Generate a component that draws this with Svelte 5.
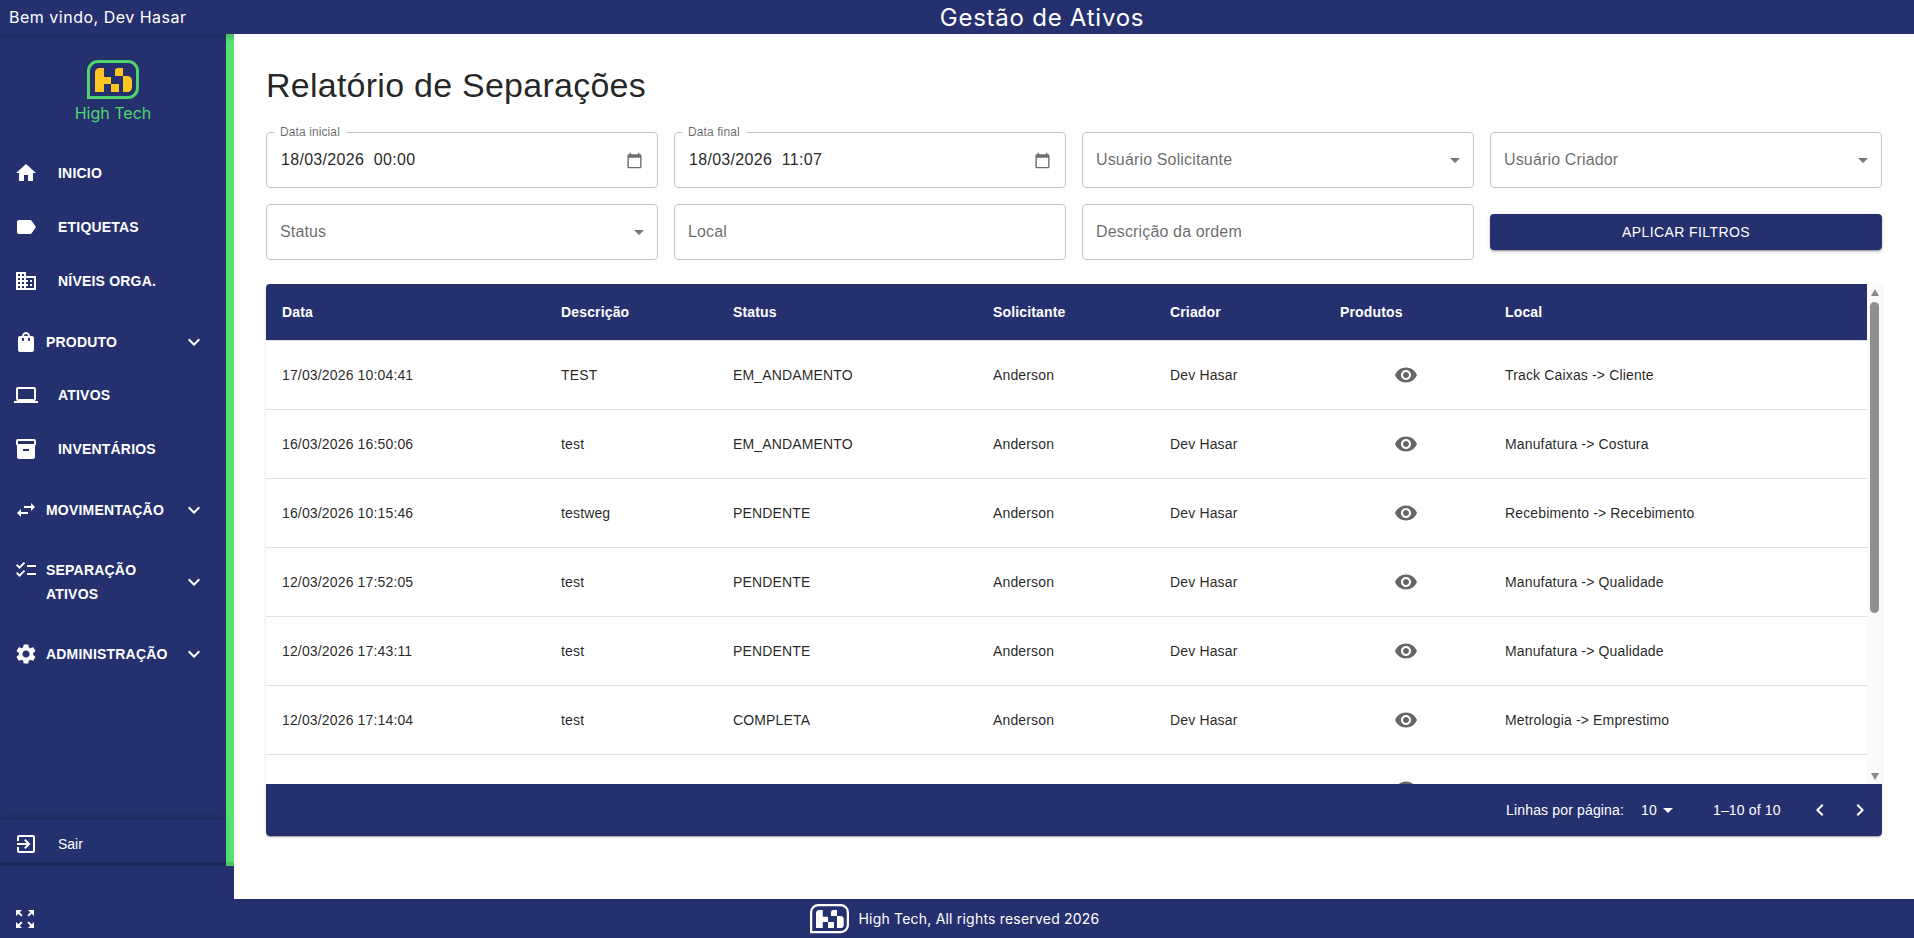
<script>
  const icons = {
    home: 'M10 20v-6h4v6h5v-8h3L12 3 2 12h3v8z',
    label: 'M17.63 5.84C17.27 5.33 16.67 5 16 5L5 5.01C3.9 5.01 3 5.9 3 7v10c0 1.1.9 1.99 2 1.99L16 19c.67 0 1.27-.33 1.63-.84L22 12l-4.37-6.16z',
    business: 'M12 7V3H2v18h20V7H12zM6 19H4v-2h2v2zm0-4H4v-2h2v2zm0-4H4V9h2v2zm0-4H4V5h2v2zm4 12H8v-2h2v2zm0-4H8v-2h2v2zm0-4H8V9h2v2zm0-4H8V5h2v2zm10 12h-8v-2h2v-2h-2v-2h2v-2h-2V9h8v10zm-2-8h-2v2h2v-2zm0 4h-2v2h2v-2z',
    bag: 'M18 6h-2c0-2.21-1.79-4-4-4S8 3.79 8 6H6c-1.1 0-2 .9-2 2v12c0 1.1.9 2 2 2h12c1.1 0 2-.9 2-2V8c0-1.1-.9-2-2-2zm-8 4c0 .55-.45 1-1 1s-1-.45-1-1V8h2v2zm2-6c1.1 0 2 .9 2 2h-4c0-1.1.9-2 2-2zm4 6c0 .55-.45 1-1 1s-1-.45-1-1V8h2v2z',
    laptop: 'M20 18c1.1 0 1.99-.9 1.99-2L22 6c0-1.1-.9-2-2-2H4c-1.1 0-2 .9-2 2v10c0 1.1.9 2 2 2H0v2h24v-2h-4zM4 6h16v10H4V6z',
    inventory: 'M20 2H4c-1 0-2 .9-2 2v3.01c0 .72.43 1.34 1 1.69V20c0 1.1 1.1 2 2 2h14c.9 0 2-.9 2-2V8.7c.57-.35 1-.97 1-1.69V4c0-1.1-1-2-2-2zm-5 12H9v-2h6v2zm5-7H4V4l16-.02V7z',
    swap: 'M6.99 11L3 15l3.99 4v-3H14v-2H6.99v-3zM21 9l-3.99-4v3H10v2h7.01v3L21 9z',
    checklist: 'M22 7h-9v2h9V7zm0 8h-9v2h9v-2zM5.54 11 2 7.46l1.41-1.41 2.12 2.12 4.24-4.24 1.41 1.41L5.54 11zm0 8L2 15.46l1.41-1.41 2.12 2.12 4.24-4.24 1.41 1.41L5.54 19z',
    settings: 'M19.14 12.94c.04-.3.06-.61.06-.94 0-.32-.02-.64-.07-.94l2.03-1.58c.18-.14.23-.41.12-.61l-1.92-3.32c-.12-.22-.37-.29-.59-.22l-2.39.96c-.5-.38-1.03-.7-1.62-.94l-.36-2.54c-.04-.24-.24-.41-.48-.41h-3.84c-.24 0-.43.17-.47.41l-.36 2.54c-.59.24-1.13.57-1.62.94l-2.39-.96c-.22-.08-.47 0-.59.22L2.74 8.87c-.12.21-.08.47.12.61l2.03 1.58c-.05.3-.09.63-.09.94s.02.64.07.94l-2.03 1.58c-.18.14-.23.41-.12.61l1.92 3.32c.12.22.37.29.59.22l2.39-.96c.5.38 1.03.7 1.62.94l.36 2.54c.05.24.24.41.48.41h3.84c.24 0 .44-.17.47-.41l.36-2.54c.59-.24 1.13-.56 1.62-.94l2.39.96c.22.08.47 0 .59-.22l1.92-3.32c.12-.22.07-.47-.12-.61l-2.01-1.58zM12 15.6c-1.98 0-3.6-1.62-3.6-3.6s1.62-3.6 3.6-3.6 3.6 1.62 3.6 3.6-1.62 3.6-3.6 3.6z',
    more: 'M16.59 8.59 12 13.17 7.41 8.59 6 10l6 6 6-6z',
    exit: 'M10.09 15.59L11.5 17l5-5-5-5-1.41 1.41L12.67 11H3v2h9.67l-2.58 2.59zM19 3H5c-1.11 0-2 .9-2 2v4h2V5h14v14H5v-4H3v4c0 1.1.89 2 2 2h14c1.1 0 2-.9 2-2V5c0-1.1-.9-2-2-2z',
    zoom: 'M15 3l2.3 2.3-2.89 2.87 1.42 1.42L18.7 6.7 21 9V3zM3 9l2.3-2.3 2.87 2.89 1.42-1.42L6.7 5.3 9 3H3zm6 12l-2.3-2.3 2.89-2.87-1.42-1.42L5.3 17.3 3 15v6zm12-6l-2.3 2.3-2.87-2.89-1.42 1.42 2.89 2.87L15 21h6z',
    eye: 'M12 4.5C7 4.5 2.73 7.61 1 12c1.73 4.39 6 7.5 11 7.5s9.27-3.11 11-7.5c-1.73-4.39-6-7.5-11-7.5zM12 17c-2.76 0-5-2.24-5-5s2.24-5 5-5 5 2.24 5 5-2.24 5-5 5zm0-8c-1.66 0-3 1.34-3 3s1.34 3 3 3 3-1.34 3-3-1.34-3-3-3z',
    calendar: 'M20 3h-1V1h-2v2H7V1H5v2H4c-1.1 0-2 .9-2 2v16c0 1.1.9 2 2 2h16c1.1 0 2-.9 2-2V5c0-1.1-.9-2-2-2zm0 18H4V8h16v13z',
    drop: 'M7 10l5 5 5-5z',
    left: 'M15.41 7.41 14 6l-6 6 6 6 1.41-1.41L10.83 12z',
    right: 'M10 6 8.59 7.41 13.17 12l-4.58 4.59L10 18l6-6z'
  };

  const menu = [
    { icon: 'home', label: 'INICIO' },
    { icon: 'label', label: 'ETIQUETAS' },
    { icon: 'business', label: 'NÍVEIS ORGA.' },
    { icon: 'bag', label: 'PRODUTO', group: true },
    { icon: 'laptop', label: 'ATIVOS' },
    { icon: 'inventory', label: 'INVENTÁRIOS' },
    { icon: 'swap', label: 'MOVIMENTAÇÃO', group: true },
    { icon: 'checklist', label: 'SEPARAÇÃO ATIVOS', group: true, tall: true },
    { icon: 'settings', label: 'ADMINISTRAÇÃO', group: true }
  ];

  const columns = ['Data', 'Descrição', 'Status', 'Solicitante', 'Criador', 'Produtos', 'Local'];

  const rows = [
    ['17/03/2026 10:04:41', 'TEST', 'EM_ANDAMENTO', 'Anderson', 'Dev Hasar', 'Track Caixas -> Cliente'],
    ['16/03/2026 16:50:06', 'test', 'EM_ANDAMENTO', 'Anderson', 'Dev Hasar', 'Manufatura -> Costura'],
    ['16/03/2026 10:15:46', 'testweg', 'PENDENTE', 'Anderson', 'Dev Hasar', 'Recebimento -> Recebimento'],
    ['12/03/2026 17:52:05', 'test', 'PENDENTE', 'Anderson', 'Dev Hasar', 'Manufatura -> Qualidade'],
    ['12/03/2026 17:43:11', 'test', 'PENDENTE', 'Anderson', 'Dev Hasar', 'Manufatura -> Qualidade'],
    ['12/03/2026 17:14:04', 'test', 'COMPLETA', 'Anderson', 'Dev Hasar', 'Metrologia -> Emprestimo'],
    ['', '', '', '', '', '']
  ];
</script>

{#snippet icon(name, cls = '')}
  <svg class="icon {cls}" viewBox="0 0 24 24" aria-hidden="true"><path d={icons[name]} /></svg>
{/snippet}

{#snippet logo(cls)}
  <svg class="logo {cls}" viewBox="0 0 52 40" aria-hidden="true">
    <path class="logo-frame" d="M1.5 37.5V11A9.5 9.5 0 0 1 11 1.5H41A9.5 9.5 0 0 1 50.5 11V28A9.5 9.5 0 0 1 41 37.5Z" />
    <path class="logo-mark" d="M8 12.5A4.5 4.5 0 0 1 12.5 8H17V17H24V24H17V32H8ZM24 24H32V32H24ZM31 8H36V16H28V11Q28 8 31 8ZM36 16H40.5A4.5 4.5 0 0 1 45 20.5V27.5A4.5 4.5 0 0 1 40.5 32H36Z" />
  </svg>
{/snippet}

<div class="app">
  <header class="topbar">
    <span class="welcome">Bem vindo, Dev Hasar</span>
    <span class="app-title">Gestão de Ativos</span>
  </header>

  <div class="middle">
    <aside class="sidebar">
      <div class="panel">
        <div class="brand">
          {@render logo('logo-large')}
          <span class="brand-name">High Tech</span>
        </div>
        <nav class="menu">
          {#each menu as item}
            <div class="item" class:group={item.group} class:tall={item.tall}>
              {@render icon(item.icon, item.icon === 'checklist' ? 'up' : '')}
              <span class="item-label">{item.label}</span>
              {#if item.group}
                {@render icon('more', 'chevron')}
              {/if}
            </div>
          {/each}
        </nav>
        <div class="logout">
          {@render icon('exit')}
          <span>Sair</span>
        </div>
      </div>
      <div class="band"></div>
    </aside>

    <main class="content">
      <h1>Relatório de Separações</h1>
      <section class="filters">
        <div class="field">
          <span class="legend">Data inicial</span>
          <span class="value">18/03/2026 00:00</span>
          {@render icon('calendar', 'cal')}
        </div>
        <div class="field">
          <span class="legend">Data final</span>
          <span class="value">18/03/2026 11:07</span>
          {@render icon('calendar', 'cal')}
        </div>
        <div class="field">
          <span class="hint">Usuário Solicitante</span>
          {@render icon('drop', 'caret')}
        </div>
        <div class="field">
          <span class="hint">Usuário Criador</span>
          {@render icon('drop', 'caret')}
        </div>
        <div class="field">
          <span class="hint">Status</span>
          {@render icon('drop', 'caret')}
        </div>
        <div class="field"><span class="hint">Local</span></div>
        <div class="field"><span class="hint">Descrição da ordem</span></div>
        <button class="apply" type="button">APLICAR FILTROS</button>
      </section>

      <section class="card">
        <div class="scroll-area">
          <div class="table-wrap">
            <table>
              <thead>
                <tr>
                  {#each columns as c}<th>{c}</th>{/each}
                </tr>
              </thead>
              <tbody>
                {#each rows as r}
                  <tr>
                    <td>{r[0]}</td>
                    <td>{r[1]}</td>
                    <td>{r[2]}</td>
                    <td>{r[3]}</td>
                    <td>{r[4]}</td>
                    <td class="eye-cell">{@render icon('eye', 'eye')}</td>
                    <td>{r[5]}</td>
                  </tr>
                {/each}
              </tbody>
            </table>
          </div>
          <div class="scrollbar">
            <span class="arrow arrow-up"></span>
            <span class="thumb"></span>
            <span class="arrow arrow-down"></span>
          </div>
        </div>
        <div class="pagination">
          <span>Linhas por página:</span>
          <span class="per-page">10 {@render icon('drop', 'page-caret')}</span>
          <span class="range">1–10 of 10</span>
          <span class="pager">
            {@render icon('left', 'page-nav')}
            {@render icon('right', 'page-nav')}
          </span>
        </div>
      </section>
    </main>
  </div>

  <footer class="footer">
    <span class="foot-left">{@render icon('zoom', 'expand')}</span>
    <span class="foot-center">
      {@render logo('logo-small')}
      <span>High Tech, All rights reserved 2026</span>
    </span>
    <span></span>
  </footer>
</div>

<style>
  :global(body) {
    margin: 0;
    background: #fff;
    font-family: "Liberation Sans", Arial, sans-serif;
  }

  .app {
    --navy: #25316f;
    --green: #56e170;
    display: flex;
    flex-direction: column;
    height: 938px;
    width: 1914px;
    overflow: hidden;
    background: var(--navy);
  }

  .icon {
    display: block;
    width: 24px;
    height: 24px;
    flex: none;
    fill: currentColor;
  }

  /* top bar */
  .topbar {
    display: flex;
    align-items: center;
    flex: none;
    height: 34px;
    padding-left: 9px;
    background: var(--navy);
    color: #fff;
    font-family: Inter, "Noto Sans", sans-serif;
  }
  .welcome {
    font-size: 16px;
    width: 177px;
    letter-spacing: 0.5px;
    white-space: nowrap;
  }
  .app-title {
    flex: 1;
    padding-right: 16px;
    text-align: center;
    font-size: 24px;
    letter-spacing: 0.75px;
  }

  .middle {
    display: flex;
    flex: 1;
    min-height: 0;
  }

  /* sidebar */
  .sidebar {
    position: relative;
    display: flex;
    flex-direction: column;
    flex: none;
    width: 234px;
  }
  .sidebar::before {
    content: "";
    position: absolute;
    inset: 0 0 auto 0;
    height: 8px;
    background: linear-gradient(rgba(0, 0, 0, 0.16), rgba(0, 0, 0, 0));
    z-index: 1;
  }
  .panel {
    display: flex;
    flex-direction: column;
    height: 828px;
    box-sizing: border-box;
    border-right: 8px solid var(--green);
    color: #fff;
  }
  .band {
    height: 4px;
    background: linear-gradient(to right, #1e295f 226px, #4dc465 226px);
  }
  .brand {
    display: flex;
    flex-direction: column;
    align-items: center;
    height: 112px;
    box-sizing: border-box;
    padding-top: 26px;
  }
  .logo {
    display: block;
    flex: none;
  }
  .logo-large {
    width: 52px;
    height: 40px;
    --frame: #4fd56d;
    --mark: #fdc51f;
  }
  .logo-small {
    width: 39px;
    height: 30px;
    --frame: #fff;
    --mark: #fff;
  }
  .logo-frame {
    fill: none;
    stroke: var(--frame);
    stroke-width: 3;
  }
  .logo-mark {
    fill: var(--mark);
  }
  .brand-name {
    margin-top: 3px;
    color: #4fd56d;
    font-family: Inter, "Noto Sans", sans-serif;
    font-size: 16px;
    line-height: 20px;
    white-space: nowrap;
  }

  .menu {
    flex: 1;
  }
  .item {
    display: flex;
    align-items: center;
    height: 54px;
    box-sizing: border-box;
    padding-left: 14px;
    font-size: 14px;
    font-weight: 700;
    letter-spacing: 0.2px;
  }
  .item .item-label {
    margin-left: 20px;
    line-height: 24px;
  }
  .item.group {
    height: 52px;
    margin-top: 8px;
  }
  .item.group .item-label {
    margin-left: 8px;
    width: 136px;
  }
  .item.tall {
    height: 76px;
  }
  .item :global(.up) {
    margin-bottom: 24px;
  }

  .logout {
    position: relative;
    display: flex;
    align-items: center;
    flex: none;
    height: 43px;
    box-sizing: border-box;
    padding: 5px 0 0 14px;
    font-size: 14px;
    border-top: 1px solid #1e295f;
    box-shadow: 0 -3px 6px rgba(0, 0, 0, 0.12);
  }
  .logout span {
    margin-left: 20px;
  }

  /* content */
  .content {
    flex: 1;
    box-sizing: border-box;
    min-width: 0;
    padding: 30px 32px 0;
    background: #fff;
    color: rgba(0, 0, 0, 0.87);
  }
  h1 {
    margin: 0 0 26px;
    font-size: 34px;
    font-weight: 400;
    line-height: 42px;
    letter-spacing: 0.25px;
  }

  .filters {
    display: grid;
    grid-template-columns: repeat(4, 392px);
    grid-auto-rows: 56px;
    gap: 16px;
  }
  .field {
    position: relative;
    display: flex;
    align-items: center;
    justify-content: space-between;
    box-sizing: border-box;
    padding: 0 14px 0 13px;
    border: 1px solid #c4c4c4;
    border-radius: 4px;
    font-size: 16px;
    letter-spacing: 0.15px;
  }
  .legend {
    position: absolute;
    top: -7px;
    left: 7px;
    padding: 0 6px;
    background: #fff;
    color: rgba(0, 0, 0, 0.6);
    font-size: 12px;
    line-height: 12px;
    letter-spacing: 0.1px;
  }
  .value {
    margin-left: 1px;
    color: rgba(0, 0, 0, 0.87);
    letter-spacing: 0.3px;
    word-spacing: 5px;
  }
  .hint {
    color: rgba(0, 0, 0, 0.6);
  }
  .field :global(.cal) {
    width: 17px;
    height: 17px;
    color: #6f6f6f;
  }
  .field :global(.caret) {
    margin-right: -8px;
    color: rgba(0, 0, 0, 0.54);
  }

  .apply {
    align-self: center;
    height: 36px;
    border: 0;
    border-radius: 4px;
    background: var(--navy);
    color: #fff;
    font: 400 14px "Liberation Sans", Arial, sans-serif;
    letter-spacing: 0.4px;
    box-shadow: 0 3px 1px -2px rgba(0, 0, 0, 0.2), 0 2px 2px rgba(0, 0, 0, 0.14), 0 1px 5px rgba(0, 0, 0, 0.12);
  }

  .card {
    margin-top: 24px;
    width: 1616px;
    border-radius: 4px;
    overflow: hidden;
    box-shadow: 0 2px 1px -1px rgba(0, 0, 0, 0.2), 0 1px 1px rgba(0, 0, 0, 0.14), 0 1px 3px rgba(0, 0, 0, 0.12);
  }
  .scroll-area {
    display: flex;
    height: 500px;
  }
  .table-wrap {
    width: 1601px;
    overflow: hidden;
  }
  table {
    width: 1601px;
    table-layout: fixed;
    border-collapse: collapse;
    font-size: 14px;
    letter-spacing: 0.15px;
  }
  th,
  td {
    box-sizing: border-box;
    padding: 0 16px;
  }
  th:nth-child(1) { width: 279px; }
  th:nth-child(2) { width: 172px; }
  th:nth-child(3) { width: 260px; }
  th:nth-child(4) { width: 177px; }
  th:nth-child(5) { width: 170px; }
  th:nth-child(6) { width: 165px; }
  th:nth-child(7) { width: 378px; }
  th {
    height: 56px;
    background: var(--navy);
    border-bottom: 1px solid #e0e0e0;
    color: #fff;
    font-weight: 700;
    text-align: left;
  }
  td {
    height: 69px;
    border-bottom: 1px solid #e0e0e0;
    white-space: nowrap;
  }
  td.eye-cell {
    padding: 0 17px 0 15px;
  }
  .eye-cell :global(.eye) {
    margin: 0 auto;
    color: #666;
  }

  .scrollbar {
    display: flex;
    flex-direction: column;
    align-items: center;
    width: 15px;
    background: #fafafa;
  }
  .arrow {
    flex: none;
    width: 0;
    height: 0;
    border-left: 4.5px solid transparent;
    border-right: 4.5px solid transparent;
  }
  .arrow-up {
    margin-top: 5px;
    border-bottom: 7px solid #8a8a8a;
  }
  .arrow-down {
    margin-top: auto;
    margin-bottom: 4px;
    border-top: 7px solid #8a8a8a;
  }
  .thumb {
    margin-top: 6px;
    width: 9px;
    height: 311px;
    border-radius: 5px;
    background: #8f8f8f;
  }

  .pagination {
    display: flex;
    align-items: center;
    justify-content: flex-end;
    height: 52px;
    padding-right: 10px;
    background: var(--navy);
    color: #fff;
    font-size: 14px;
    letter-spacing: 0.15px;
    white-space: nowrap;
  }
  .per-page {
    display: flex;
    align-items: center;
    margin-left: 17px;
    width: 52px;
  }
  .per-page :global(.page-caret) {
    margin-left: -1px;
  }
  .range {
    margin-left: 20px;
    width: 67px;
  }
  .pager {
    display: flex;
    gap: 16px;
    margin-left: 28px;
  }

  /* footer */
  .footer {
    display: grid;
    grid-template-columns: 1fr auto 1fr;
    align-items: center;
    flex: none;
    height: 39px;
    background: var(--navy);
    color: #fff;
    font-family: Inter, "Noto Sans", sans-serif;
    font-size: 14px;
    letter-spacing: 0.2px;
  }
  .foot-left {
    padding-left: 13px;
  }
  .foot-left :global(.expand) {
    width: 24px;
    height: 24px;
  }
  .foot-center {
    display: flex;
    align-items: center;
    gap: 10px;
    padding-right: 5px;
  }
</style>
